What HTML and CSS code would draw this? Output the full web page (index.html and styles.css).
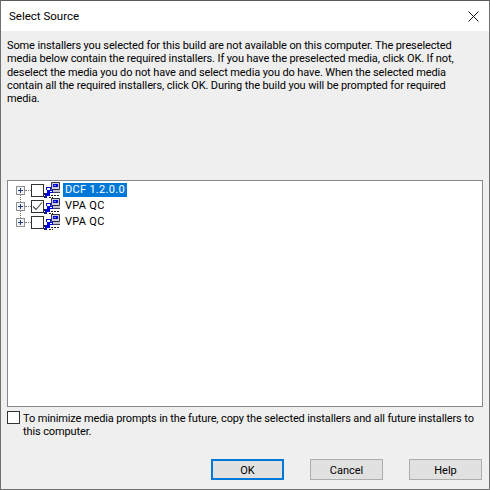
FILE: index.html
```html
<!DOCTYPE html>
<html lang="en">
<head>
<meta charset="utf-8">
<title>Select Source</title>
<link rel="stylesheet" href="styles.css">
</head>
<body>
<svg class="defs" width="0" height="0" aria-hidden="true">
  <symbol id="media" viewBox="0 0 16 17">
    <path d="M7.5 .5h8v7h-8z" fill="#d0d0dc" stroke="#303040"/>
    <path d="M9 2h5v3H9z" fill="#0000d0"/>
    <path d="M10 3h2v1h-2z" fill="#8080ff"/>
    <path d="M7 8h9v3H7z" fill="#c4c4d0"/>
    <path d="M9 10h7v1H9z" fill="#404058"/>
    <path d="M2 5h5v3h2v3H6v3H3v2H1v-5h2V8H2z" fill="#0000e0"/>
    <path d="M3 6h3v2H3zM6 9h2v1H6z" fill="#fff"/>
    <path d="M7 13h2v1H7zM10 13h2v1h-2zM13 13h2v1h-2zM5 15h2v1H5zM8 15h1v1H8zM0 11h1v2H0zM0 14h1v2H0z" fill="#202020"/>
  </symbol>
</svg>
<div class="window">
  <header class="titlebar">
    <span class="title">Select Source</span>
    <svg class="close" width="11" height="11" viewBox="0 0 11 11"><path d="M.5.5l10 10M10.5.5l-10 10" stroke="#111" stroke-width="1" fill="none"/></svg>
  </header>
  <main class="content">
    <p class="intro">Some installers you selected for this build are not available on this computer. The preselected media below contain the required installers. If you have the preselected media, click OK. If not, deselect the media you do not have and select media you do have. When the selected media contain all the required installers, click OK. During the build you will be prompted for required media.</p>
    <div class="tree">
      <div class="node">
        <span class="expander"></span><span class="dots"></span><span class="check"></span>
        <svg class="icon" width="16" height="17"><use href="#media"/></svg>
        <span class="label selected">DCF 1.2.0.0</span>
      </div>
      <div class="node">
        <span class="expander"></span><span class="dots"></span>
        <span class="check"><svg width="11" height="11" viewBox="0 0 11 11"><path d="M1 5.5l3 3 6-7" stroke="#444" stroke-width="1.1" fill="none"/></svg></span>
        <svg class="icon" width="16" height="17"><use href="#media"/></svg>
        <span class="label">VPA QC</span>
      </div>
      <div class="node last">
        <span class="expander"></span><span class="dots"></span><span class="check"></span>
        <svg class="icon" width="16" height="17"><use href="#media"/></svg>
        <span class="label">VPA QC</span>
      </div>
    </div>
    <label class="copy">
      <span class="check"></span>
      <span class="copy-text">To minimize media prompts in the future, copy the selected installers and all future installers to this computer.</span>
    </label>
    <div class="buttons">
      <button class="btn default">OK</button>
      <button class="btn">Cancel</button>
      <button class="btn">Help</button>
    </div>
  </main>
</div>
</body>
</html>
```
FILE: styles.css
```css
* { box-sizing: border-box; }
html, body { margin: 0; padding: 0; }
body {
  width: 490px;
  height: 490px;
  overflow: hidden;
  font-family: Roboto, "Noto Sans", "Liberation Sans", sans-serif;
  font-size: 11px;
  color: #000;
}
.defs { display: block; height: 0; }
.window {
  width: 490px;
  height: 490px;
  border: 1px solid #707070;
  border-top-color: #5a5a5a;
  display: flex;
  flex-direction: column;
  background: #efefef;
}
.titlebar {
  height: 30px;
  flex: none;
  background: #fff;
  display: flex;
  align-items: center;
  justify-content: space-between;
  padding: 0 10px 0 8px;
}
.title { font-size: 11.5px; }
.content {
  flex: 1;
  display: flex;
  flex-direction: column;
  padding: 8px 6px 8px;
}
.intro {
  margin: 0;
  height: 141px;
  padding-right: 10px;
  line-height: 13.3px;
  letter-spacing: -0.11px;
}
.tree {
  height: 227px;
  background: #fff;
  border: 1px solid #828790;
  padding: 1px 0 0 8px;
  display: flex;
  flex-direction: column;
}
.node {
  height: 16px;
  display: flex;
  align-items: center;
  position: relative;
}
.node:not(.last)::after {
  content: "";
  position: absolute;
  left: 4px;
  top: 12px;
  height: 8px;
  border-left: 1px dotted #808080;
}
.expander {
  width: 9px;
  height: 9px;
  flex: none;
  border: 1px solid #919191;
  background:
    linear-gradient(#1a3a8a, #1a3a8a) center / 5px 1px no-repeat,
    linear-gradient(#1a3a8a, #1a3a8a) center / 1px 5px no-repeat,
    #f4f4f4;
}
.dots {
  width: 6px;
  flex: none;
  border-top: 1px dotted #808080;
}
.check {
  width: 13px;
  height: 13px;
  flex: none;
  background: #fff;
  border: 1px solid #333;
  display: flex;
  align-items: center;
  justify-content: center;
}
.icon { flex: none; }
.label {
  margin-left: 3px;
  padding: 0 2px;
  height: 14px;
  line-height: 14px;
  letter-spacing: 0.3px;
}
.selected { background: #0078d7; color: #fff; }
.copy {
  display: flex;
  gap: 3px;
  margin-top: 4px;
  line-height: 13.3px;
}
.copy-text {
  padding-top: 1px;
  letter-spacing: -0.12px;
}
.buttons {
  margin-top: auto;
  display: flex;
  justify-content: flex-end;
  gap: 26px;
  padding: 0 1px 1px 0;
}
.btn {
  width: 73px;
  height: 21px;
  padding: 1px 0 0;
  font: inherit;
  color: #000;
  background: #e1e1e1;
  border: 1px solid #adadad;
}
.btn.default { border: 2px solid #0078d7; }
```
